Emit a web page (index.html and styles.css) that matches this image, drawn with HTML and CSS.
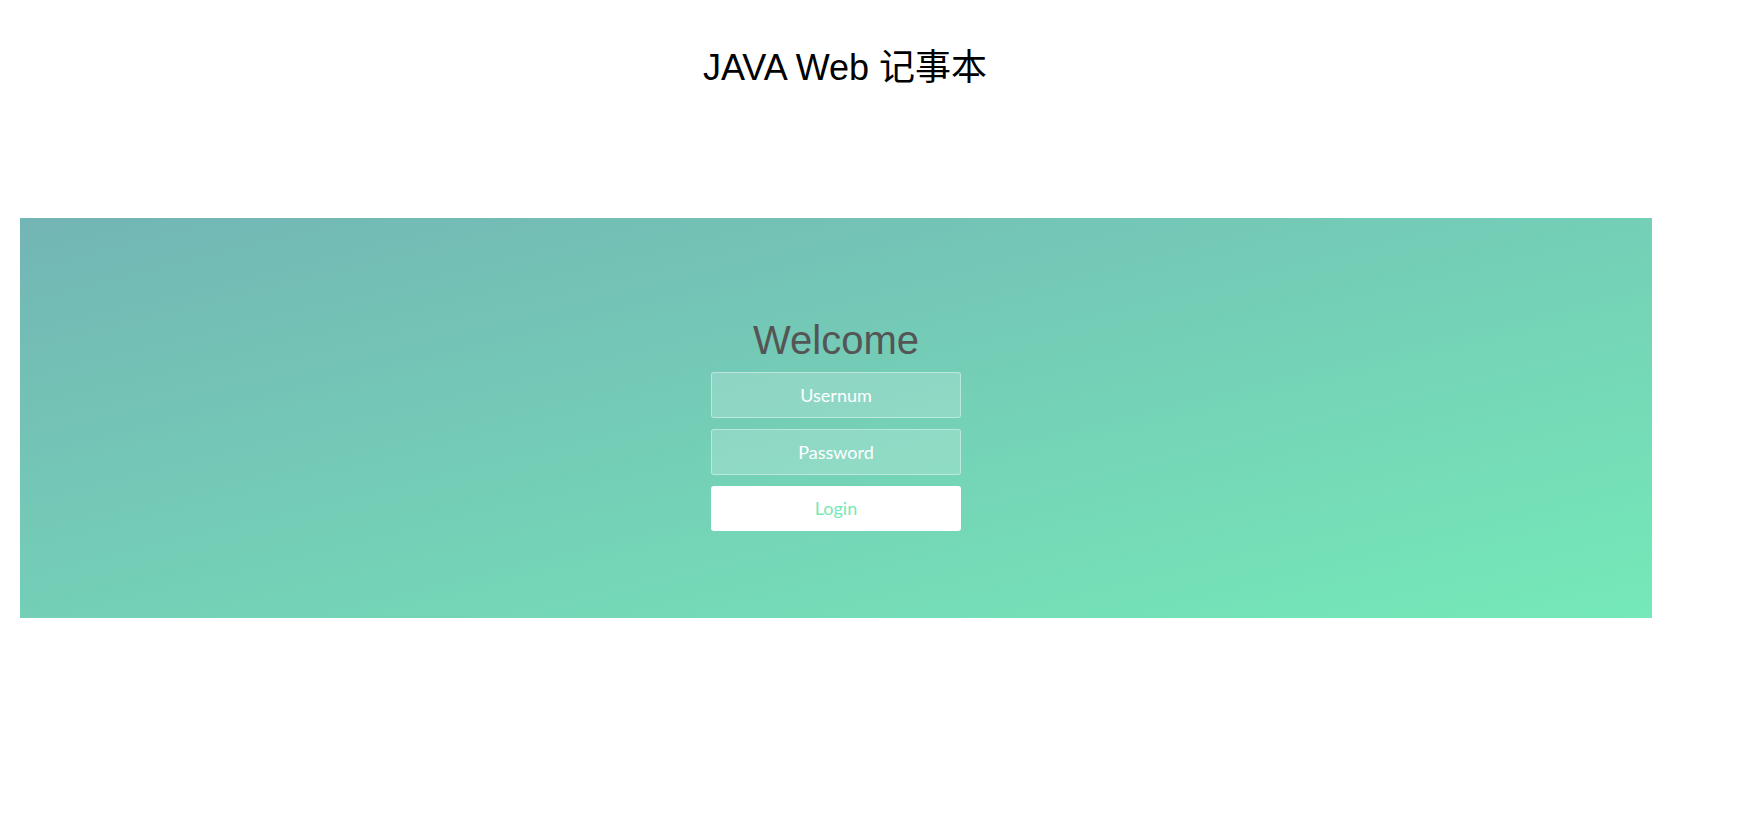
FILE: index.html
```html
<!DOCTYPE html>
<html lang="zh-CN">
<head>
<meta charset="utf-8">
<title>JAVA Web 记事本</title>
<link rel="stylesheet" href="styles.css">
</head>
<body>
<header class="header">
  <h1 class="title">JAVA Web 记事本</h1>
</header>
<section class="panel">
  <h2 class="welcome">Welcome</h2>
  <form class="login-form">
    <input class="field" type="text" placeholder="Usernum">
    <input class="field" type="password" placeholder="Password">
    <button class="login-btn" type="button">Login</button>
  </form>
</section>
</body>
</html>
```
FILE: styles.css
```css
html, body {
  margin: 0;
  padding: 0;
  background: #fff;
}
body {
  font-family: "Liberation Sans", "Noto Sans CJK SC", sans-serif;
}
.header {
  padding-top: 47px;
  padding-right: 67px;
  text-align: center;
}
.title {
  margin: 0;
  font-size: 36px;
  line-height: 42px;
  font-weight: normal;
  color: #000;
  font-family: "Liberation Sans", "Noto Sans CJK SC", sans-serif;
}
.panel {
  margin-top: 129px;
  margin-left: 20px;
  width: 1632px;
  height: 400px;
  box-sizing: border-box;
  padding-top: 99px;
  background: linear-gradient(to bottom right, #73b5b5 0%, #75e9b8 100%);
  display: flex;
  flex-direction: column;
  align-items: center;
}
.welcome {
  margin: 0 0 9px;
  font-size: 40px;
  line-height: 46px;
  font-weight: normal;
  color: #555;
  font-family: "Liberation Sans", sans-serif;
}
.login-form {
  display: flex;
  flex-direction: column;
  gap: 11px;
  width: 250px;
}
.field {
  box-sizing: border-box;
  width: 250px;
  height: 46px;
  margin: 0;
  padding: 10px 15px;
  border: 1px solid rgba(255, 255, 255, 0.4);
  background: rgba(255, 255, 255, 0.2);
  border-radius: 3px;
  text-align: center;
  font-family: "Lato", "Open Sans", sans-serif;
  font-size: 18px;
  font-weight: 400;
  color: #fff;
  outline: none;
}
.field::placeholder {
  color: #fff;
  opacity: 1;
}
.login-btn {
  box-sizing: border-box;
  width: 250px;
  height: 45px;
  margin: 0;
  padding: 9px 15px 11px;
  border: 0;
  background: #fff;
  border-radius: 3px;
  color: #75e9b8;
  font-family: "Lato", "Open Sans", sans-serif;
  font-size: 18px;
  cursor: pointer;
}
```
